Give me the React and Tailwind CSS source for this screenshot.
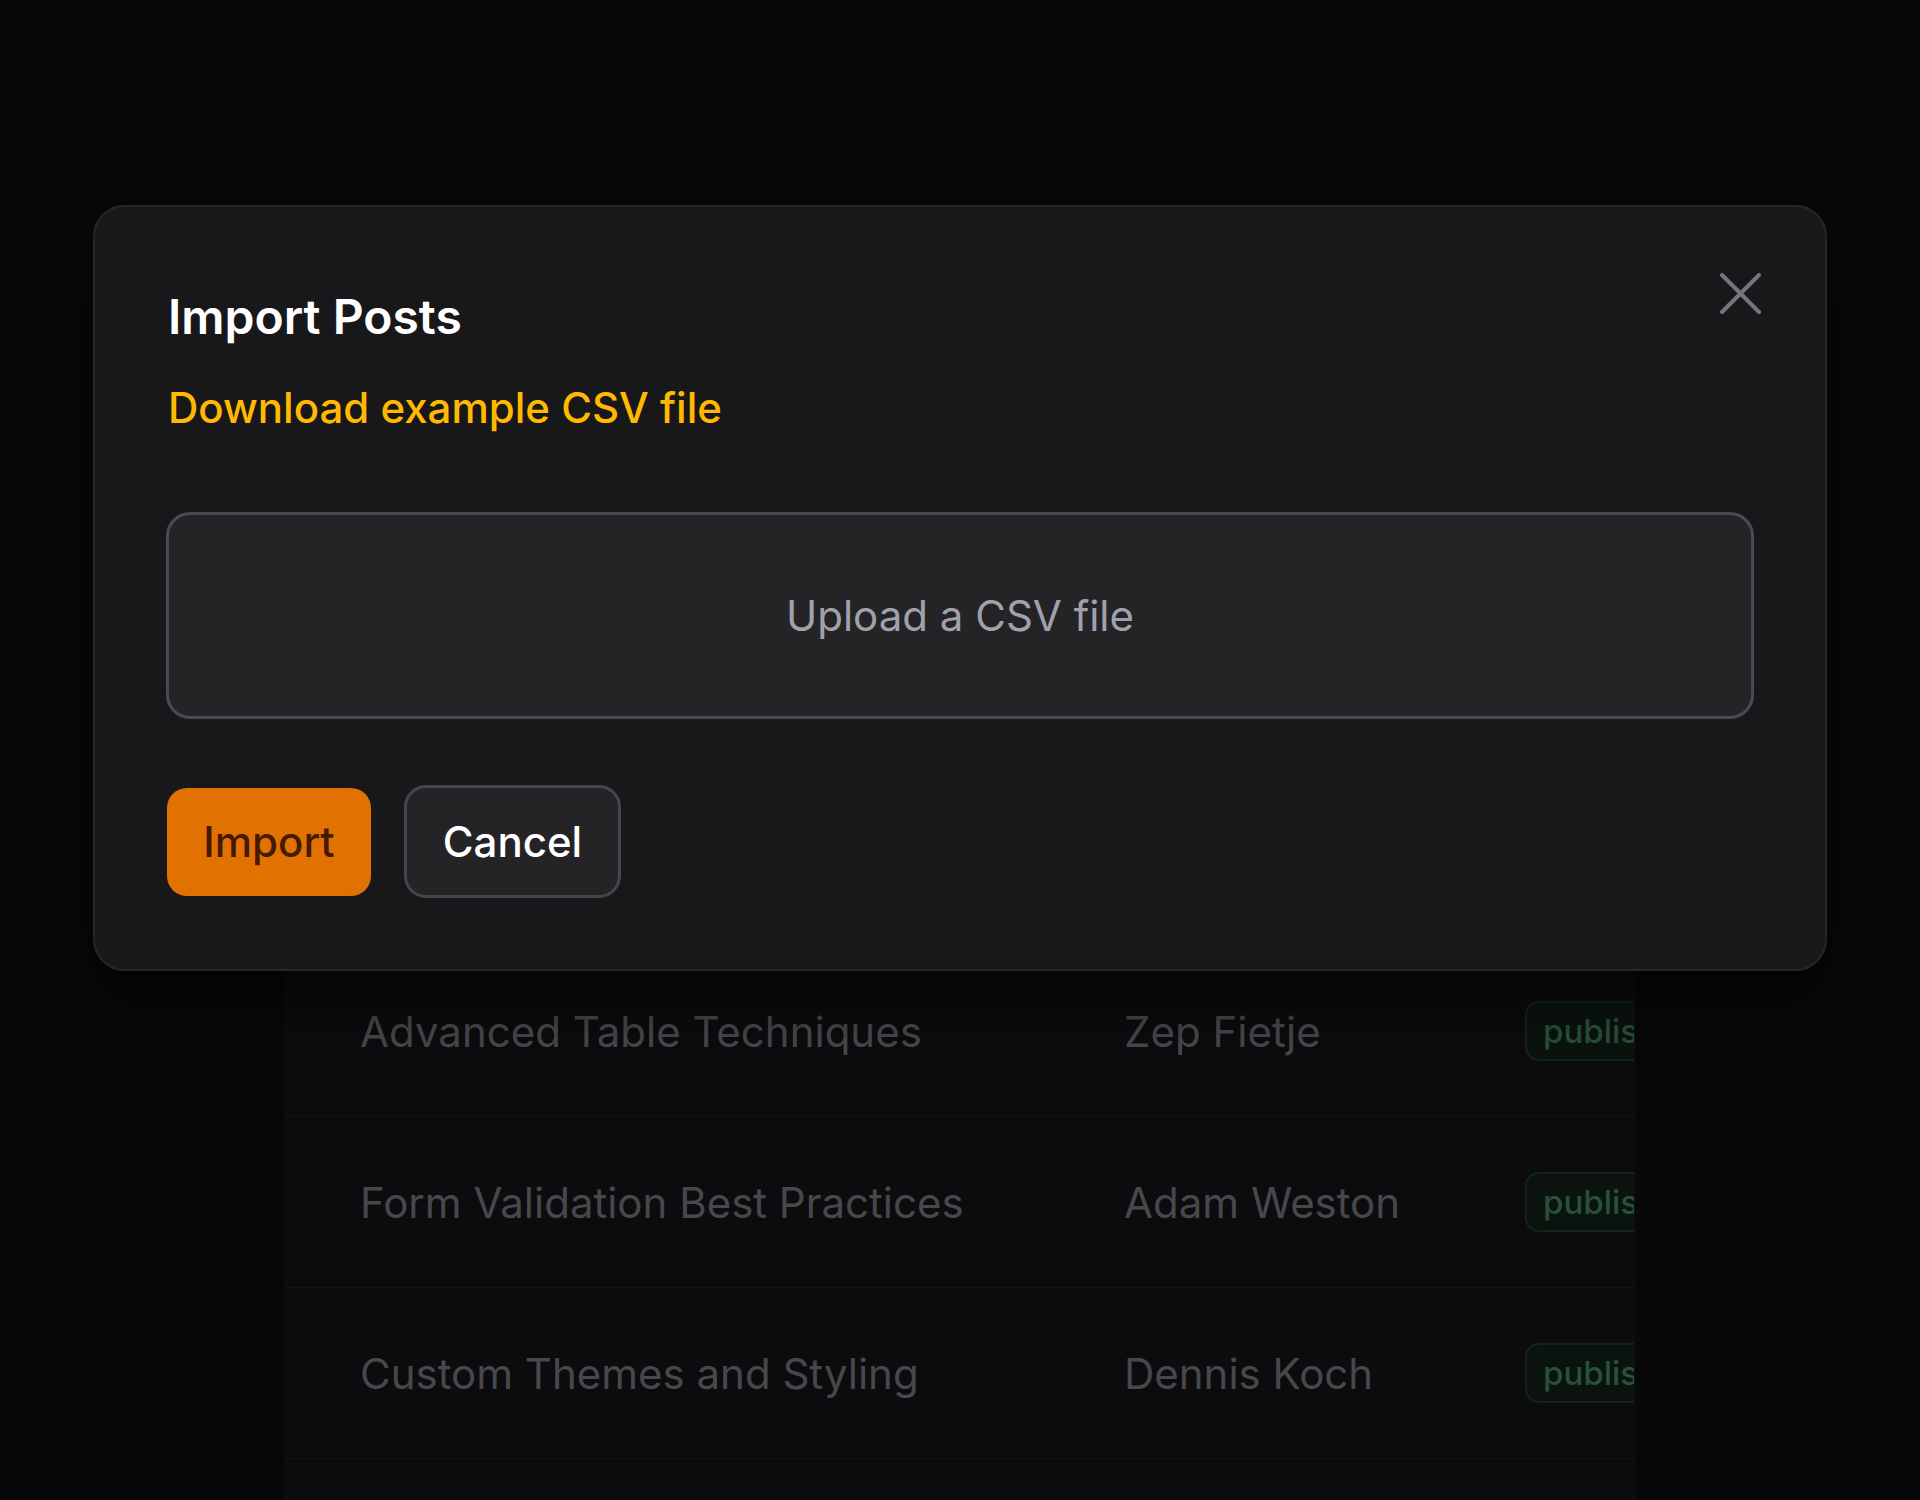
import React from "react";

const rows = [
  { title: "Getting Started with Filament", author: "Dan Harrin", status: "published" },
  { title: "Building Admin Panels", author: "Ryan Chandler", status: "published" },
  { title: "Working with Relationships", author: "Hassan Zahirnia", status: "published" },
  { title: "Notifications and Actions", author: "Alex Six", status: "published" },
  { title: "Advanced Table Techniques", author: "Zep Fietje", status: "published" },
  { title: "Form Validation Best Practices", author: "Adam Weston", status: "published" },
  { title: "Custom Themes and Styling", author: "Dennis Koch", status: "published" },
  { title: "Testing Your Resources", author: "Lukas Frey", status: "published" },
];

const CloseIcon = () => (
  <svg width="41" height="41" viewBox="0 0 41 41" fill="none">
    <path
      d="M2 2 39 39M39 2 2 39"
      stroke="currentColor"
      strokeWidth="4"
      strokeLinecap="round"
    />
  </svg>
);

const App = () => {
  return (
    <div className="relative h-[1500px] w-full overflow-hidden bg-[#08080a] font-['Inter','Liberation_Sans',sans-serif]">
      {/* table behind the modal */}
      <div className="flex justify-center pt-[262px]">
        <div className="w-[1350px] overflow-hidden border-x border-[#111114] bg-[#0c0c0e]">
          {rows.map((row) => (
            <div
              key={row.title}
              className="flex h-[171px] items-center whitespace-nowrap border-b border-[#141417]"
            >
              <div className="w-[838px] shrink-0 pl-[74px] text-[42px] text-[#47474c]">
                {row.title}
              </div>
              <div className="w-[401px] shrink-0 text-[42px] text-[#47474c]">
                {row.author}
              </div>
              <div className="shrink-0 rounded-[14px] border-2 border-[#13251a] bg-[#0b130e] px-4 py-2 text-[33px] leading-[40px] font-medium text-[#28503a]">
                {row.status}
              </div>
            </div>
          ))}
        </div>
      </div>

      {/* modal */}
      <div className="absolute left-1/2 top-[205px] w-[1734px] -translate-x-1/2 rounded-[32px] border-2 border-[#27272b] bg-[#18181b] p-[71px] shadow-[0_30px_60px_rgba(0,0,0,0.6)]">
        <button className="absolute right-[64px] top-[66px] text-[#75757d]">
          <CloseIcon />
        </button>

        <h2 className="ml-[2px] mt-[3px] text-[48px] leading-[72px] font-semibold text-white">
          Import Posts
        </h2>
        <a className="ml-[2px] mt-[27px] block text-[42px] leading-[56px] font-medium text-[#ffb900]">
          Download example CSV file
        </a>

        <div className="mt-[76px] flex h-[207px] items-center justify-center rounded-[24px] border-[3px] border-[#4a4a50] bg-[#242427]">
          <span className="text-[42px] text-[#a1a1aa]">Upload a CSV file</span>
        </div>

        <div className="ml-[1px] mt-[66px] flex items-center gap-[33px]">
          <button className="h-[108px] w-[204px] rounded-[20px] bg-[#e17100] text-[42px] font-medium text-[#461901]">
            Import
          </button>
          <button className="h-[113px] w-[217px] rounded-[22px] border-[3px] border-[#45454b] bg-[#242427] text-[42px] font-medium text-white">
            Cancel
          </button>
        </div>
      </div>
    </div>
  );
};

export default App;
